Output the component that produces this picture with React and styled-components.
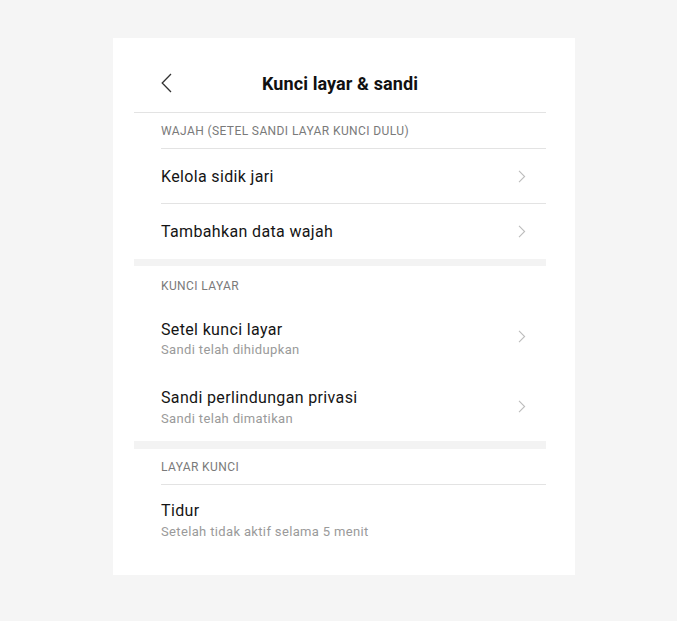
import React from "react";
import styled, { createGlobalStyle } from "styled-components";

const Global = createGlobalStyle`
  html, body { margin: 0; padding: 0; background: #f5f5f5; }
  body { font-family: Roboto, "Noto Sans", "Liberation Sans", sans-serif; }
  #root { min-height: 621px; }
`;

const Page = styled.div`
  padding: 38px 0 46px 113px;
`;

const Card = styled.div`
  width: 462px;
  box-sizing: border-box;
  background: #ffffff;
  padding: 0 29px 20px 21px;
`;

const Header = styled.div`
  height: 75px;
  padding-top: 16px;
  position: relative;
  display: flex;
  align-items: center;
  justify-content: center;
  border-bottom: 1px solid #e3e3e3;
  box-sizing: border-box;
`;

const Back = styled.button`
  position: absolute;
  left: 27px;
  top: 35px;
  padding: 0;
  border: 0;
  background: none;
  display: flex;
`;

const Title = styled.h1`
  margin: 0;
  font-size: 18px;
  font-weight: 700;
  color: #111;
  letter-spacing: 0.1px;
`;

const SectionLabel = styled.div`
  margin-left: 27px;
  height: 36px;
  padding-top: ${(p) => (p.$divider ? 0 : 4)}px;
  display: flex;
  align-items: center;
  font-size: 12px;
  letter-spacing: 0.4px;
  color: #7a7a7a;
  text-transform: uppercase;
  box-sizing: border-box;
  border-bottom: ${(p) => (p.$divider ? "1px solid #e3e3e3" : "none")};
`;

const Row = styled.div`
  margin-left: 27px;
  height: ${(p) => p.$h}px;
  display: flex;
  align-items: center;
  justify-content: space-between;
  box-sizing: border-box;
  border-bottom: ${(p) => (p.$divider ? "1px solid #e3e3e3" : "none")};
`;

const Texts = styled.div`
  display: flex;
  flex-direction: column;
  gap: ${(p) => p.$gap}px;
  padding-top: ${(p) => p.$pt}px;
`;

const RowTitle = styled.div`
  font-size: 16px;
  letter-spacing: 0.35px;
  color: #151515;
`;

const RowSub = styled.div`
  font-size: 13px;
  letter-spacing: 0.35px;
  color: #9a9a9a;
`;

const Chevron = styled.svg`
  margin-right: 20px;
  flex: none;
`;

const Band = styled.div`
  height: ${(p) => p.$h}px;
  background: #f3f3f3;
`;

const Arrow = () => (
  <Chevron width="8" height="13" viewBox="0 0 8 13">
    <path d="M1 0.8 L6.6 6.5 L1 12.2" fill="none" stroke="#bdbdbd" strokeWidth="1.1" />
  </Chevron>
);

const Item = ({ title, sub, divider, h, pt = 0, gap = 3, arrow = true }) => (
  <Row $h={h} $divider={divider}>
    <Texts $pt={pt} $gap={gap}>
      <RowTitle>{title}</RowTitle>
      {sub && <RowSub>{sub}</RowSub>}
    </Texts>
    {arrow && <Arrow />}
  </Row>
);

export default function App() {
  return (
    <>
      <Global />
      <Page>
        <Card>
          <Header>
            <Back aria-label="Kembali">
              <svg width="11" height="20" viewBox="0 0 11 20">
                <path d="M10 1 L1.2 10 L10 19" fill="none" stroke="#333" strokeWidth="1.3" />
              </svg>
            </Back>
            <Title>Kunci layar &amp; sandi</Title>
          </Header>

          <SectionLabel $divider>Wajah (setel sandi layar kunci dulu)</SectionLabel>
          <Item h={55} title="Kelola sidik jari" divider />
          <Item h={55} title="Tambahkan data wajah" />
          <Band $h={7} />

          <SectionLabel>Kunci layar</SectionLabel>
          <Item h={69} pt={4} title="Setel kunci layar" sub="Sandi telah dihidupkan" />
          <Item h={70} pt={2} gap={4} title="Sandi perlindungan privasi" sub="Sandi telah dimatikan" />
          <Band $h={8} />

          <SectionLabel $divider>Layar kunci</SectionLabel>
          <Item h={70} pt={0} gap={4} title="Tidur" sub="Setelah tidak aktif selama 5 menit" arrow={false} />
        </Card>
      </Page>
    </>
  );
}
